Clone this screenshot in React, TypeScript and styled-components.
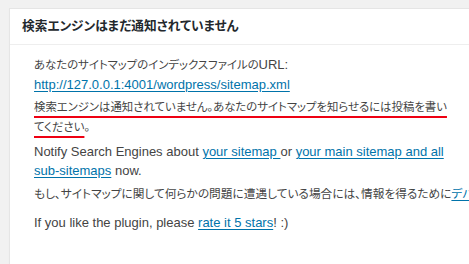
import { createGlobalStyle } from 'styled-components';
import styled from 'styled-components';

const GlobalStyle = createGlobalStyle`
  html, body {
    margin: 0;
    padding: 0;
    background: #f1f1f1;
    overflow: hidden;
  }
  body {
    font-family: "Liberation Sans", "Noto Sans CJK JP", sans-serif;
    font-feature-settings: "palt";
    color: #444;
  }
`;

const Page = styled.div`
  padding: 8px 0 0 9px;
  height: 264px;
  box-sizing: border-box;
`;

const Panel = styled.div`
  width: 490px;
  height: 300px;
  background: #fff;
  border: 1px solid #e5e5e5;
  box-shadow: 0 1px 1px rgba(0, 0, 0, 0.04);
`;

const Header = styled.h2`
  margin: 0;
  padding: 8px 12px;
  font-size: 12.7px;
  line-height: 19px;
  font-weight: 600;
  color: #23282d;
  border-bottom: 1px solid #eee;
`;

const Body = styled.ul`
  list-style: none;
  margin: 0;
  padding: 10px 12px 0 24px;
  font-size: 13px;
  line-height: 19px;
  white-space: nowrap;
`;

const Item = styled.li<{ $gap?: number }>`
  margin: ${({ $gap }) => $gap ?? 0}px 0 0;
`;

// Japanese runs: the CJK face is wider than the original one, so it is set smaller
const Ja = styled.span<{ $size?: number }>`
  font-size: ${({ $size }) => $size ?? 11.4}px;
`;

const Link = styled.a`
  color: #0073aa;
  text-decoration: underline;
  text-underline-offset: 2px;
`;

const Warn = styled.span`
  text-decoration: underline;
  text-decoration-color: #ee0012;
  text-decoration-thickness: 2px;
  text-underline-offset: 5px;
`;

export default function App() {
  return (
    <>
      <GlobalStyle />
      <Page>
        <Panel>
          <Header>検索エンジンはまだ通知されていません</Header>
          <Body>
            <Item>
              <Ja>あなたのサイトマップのインデックスファイルの</Ja>URL:
              <br />
              <Link href="#">http://127.0.0.1:4001/wordpress/sitemap.xml</Link>
            </Item>
            <Item $gap={3}>
              <Ja>
                <Warn>検索エンジンは通知されていません。あなたのサイトマップを知らせるには投稿を書い</Warn>
                <br />
                <Warn>てください</Warn>。
              </Ja>
            </Item>
            <Item $gap={5}>
              Notify Search Engines about <Link href="#">your sitemap </Link> or{' '}
              <Link href="#">your main sitemap and all</Link>
              <br />
              <Link href="#">sub-sitemaps</Link> now.
            </Item>
            <Item $gap={4}>
              <Ja $size={11.7}>
                もし、サイトマップに関して何らかの問題に遭遇している場合には、情報を得るために
                <Link href="#">デバッグ機能</Link>を使用できます。
              </Ja>
            </Item>
            <Item $gap={10}>
              If you like the plugin, please <Link href="#">rate it 5 stars</Link>! :)
            </Item>
          </Body>
        </Panel>
      </Page>
    </>
  );
}
